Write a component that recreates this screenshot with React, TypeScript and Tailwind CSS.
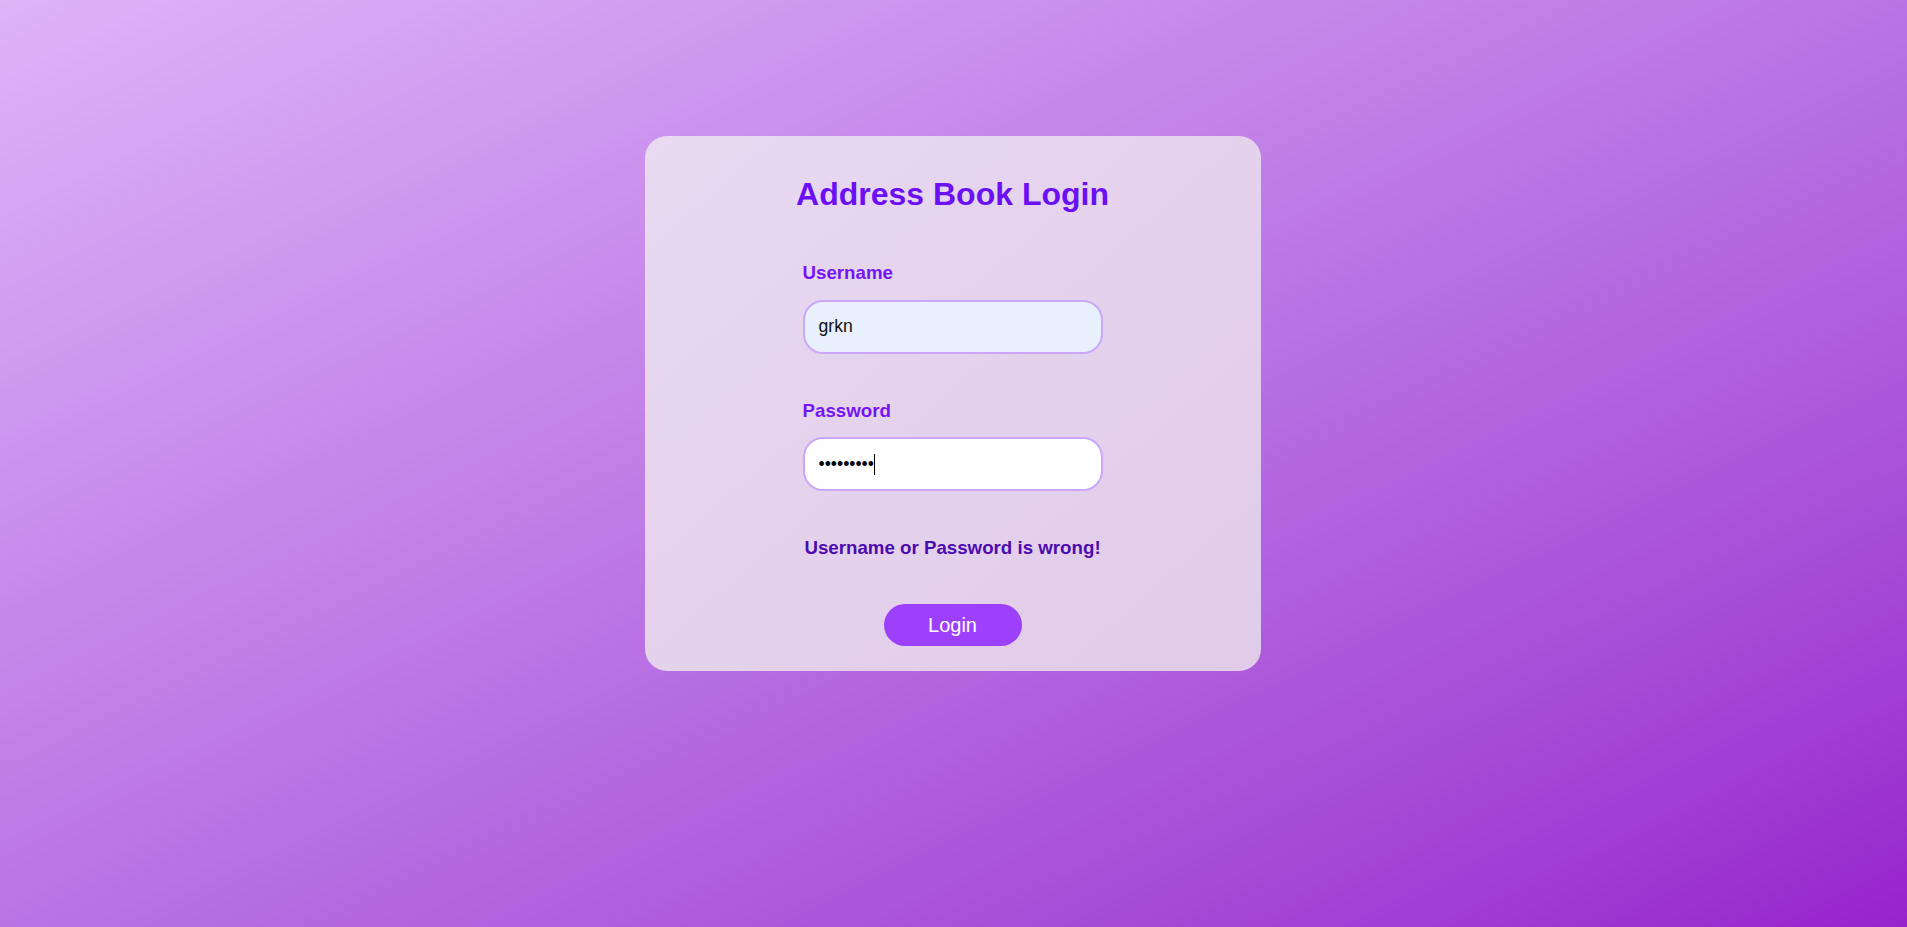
import React from "react";

export default function App() {
  return (
    <div
      className="h-screen w-full overflow-hidden bg-linear-to-br from-[#deb3f8] to-[#9722cd] flex justify-center pt-[136px] pr-[2px]"
      style={{ fontFamily: '"Liberation Sans", Arial, sans-serif' }}
    >
      <div className="w-[616px] h-[535px] rounded-[22px] bg-linear-to-br from-[#e9d9f1] to-[#e0cbe9] pt-[40px] pb-[24px] flex flex-col items-center">
        <h1 className="text-[32px] leading-[36px] font-bold text-[#6b10f4]">Address Book Login</h1>

        <div className="w-[300px] mt-[50px] flex flex-col">
          <label className="block text-[18.72px] leading-[22px] font-bold text-[#7514f5]">Username</label>
          <div className="mt-[15.5px] h-[54px] border-2 border-[#caa7fa] rounded-[20px] px-[14px] flex items-center bg-[#e8f0fe] text-[17.6px] text-[#111111]">
            grkn
          </div>

          <label className="block mt-[46px] text-[18.72px] leading-[22px] font-bold text-[#7514f5]">Password</label>
          <div className="mt-[15.5px] h-[54px] border-2 border-[#caa7fa] rounded-[20px] px-[14px] flex items-center bg-white text-[17.6px] text-black">
            <span>•••••••••</span>
            <span className="inline-block w-px h-[21px] bg-black" />
          </div>
        </div>

        <p className="mt-[45.5px] text-[18.72px] leading-[22px] font-bold text-[#4d0bb0] text-center">
          Username or Password is wrong!
        </p>

        <button className="mt-[45.5px] h-[42px] w-[138px] rounded-full bg-[#9c40fc] text-white text-[20px] leading-[23px]">
          Login
        </button>
      </div>
    </div>
  );
}
